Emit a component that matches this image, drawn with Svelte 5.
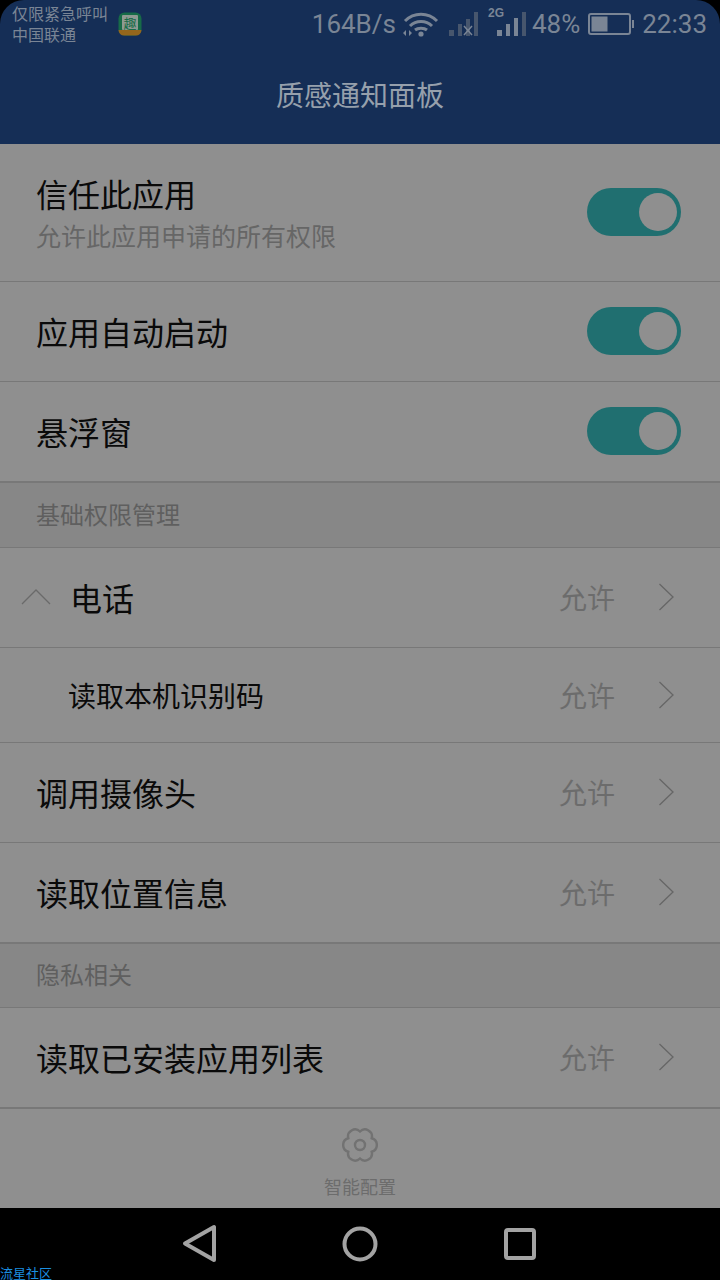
<script lang="ts">
	const basic = [
		{ label: '读取本机识别码', cls: 'sub' },
		{ label: '调用摄像头', cls: 'tall' },
		{ label: '读取位置信息', cls: 'tall' }
	];
	const toggles = ['应用自动启动', '悬浮窗'];

	// six lobed outline of the settings gear
	const valley = (k: number) => {
		const a = ((30 + 60 * k) * Math.PI) / 180;
		return `${(18 + 13.5 * Math.cos(a)).toFixed(2)} ${(18 + 13.5 * Math.sin(a)).toFixed(2)}`;
	};
	const gear =
		`M${valley(0)}` +
		[1, 2, 3, 4, 5, 6].map((k) => ` A7 7 0 0 0 ${valley(-k)}`).join('') +
		'z';
</script>

<div class="screen">
	<header class="top">
		<div class="status">
			<div class="carrier">
				<span>仅限紧急呼叫</span>
				<span>中国联通</span>
			</div>
			<svg class="app-icon" width="24" height="24" viewBox="0 0 24 24">
				<rect width="23" height="23" x="0.5" y="0.5" rx="6" fill="#176b48" />
				<rect x="4" y="3" width="16" height="15" rx="1" fill="#8f9a92" />
				<path d="M0.5 18h23a5.500 5.500 0 0 1-5.500 5.500h-12a5.500 5.500 0 0 1-5.500-5.500z" fill="#94661c" />
				<text x="12" y="16" text-anchor="middle" font-size="13" fill="#176b48">趣</text>
			</svg>
			<div class="indicators">
				<span class="speed">164B/s</span>
				<svg class="wifi" width="36" height="26" viewBox="0 0 36 26" fill="none" stroke="#7a8595">
					<path d="M2 10c9-9 23-9 32 0M7 15c6-6 16-6 22 0M12 19c3-2.500 9-2.500 12 0" stroke-width="3" />
					<circle cx="18" cy="23" r="2.600" fill="#7a8595" stroke="none" />
					<path d="M0 22l3-3v6zM9 22l-3-3v6z" fill="#7a8595" stroke="none" />
				</svg>
				<svg class="sig1" width="30" height="24" viewBox="0 0 30 24">
					<rect x="0" y="18" width="5" height="6" fill="#47566d" />
					<rect x="9" y="12" width="4" height="12" fill="#47566d" />
					<rect x="17" y="7" width="4" height="17" fill="#47566d" />
					<rect x="25" y="0" width="4" height="24" fill="#47566d" />
					<path d="M15 14l8 9M23 14l-8 9" stroke="#7a8595" stroke-width="1.500" />
				</svg>
				<div class="sig2">
					<b>2G</b>
					<svg width="30" height="24" viewBox="0 0 30 24">
						<rect x="0" y="18" width="5" height="6" fill="#7a8595" />
						<rect x="9" y="12" width="4" height="12" fill="#7a8595" />
						<rect x="17" y="6" width="4" height="18" fill="#7a8595" />
						<rect x="25" y="0" width="4" height="24" fill="#47566d" />
					</svg>
				</div>
				<span class="pct">48%</span>
				<svg width="46" height="24" viewBox="0 0 46 24">
					<rect x="1" y="2" width="41" height="20" rx="2" fill="none" stroke="#7a8595" stroke-width="2" />
					<rect x="3.500" y="4.500" width="16" height="15" fill="#7a8595" />
					<rect x="44" y="8" width="2" height="8" fill="#7a8595" />
				</svg>
				<span class="time">22:33</span>
			</div>
		</div>
		<h1>质感通知面板</h1>
	</header>

	<main class="list">
		<div class="row first">
			<div>
				<div class="title">信任此应用</div>
				<div class="desc">允许此应用申请的所有权限</div>
			</div>
			<span class="switch"><i></i></span>
		</div>
		{#each toggles as t}
			<div class="row toggle">
				<div class="title">{t}</div>
				<span class="switch"><i></i></span>
			</div>
		{/each}

		<div class="section">基础权限管理</div>

		<div class="row tall phone">
			<svg class="up" width="30" height="18" viewBox="0 0 30 18" fill="none" stroke="#6a6a6a" stroke-width="1.300">
				<path d="M1 16L15 2l14 14" />
			</svg>
			<div class="title grow">电话</div>
			<span class="allow">允许</span>
			<svg class="chev" width="16" height="28" viewBox="0 0 16 28" fill="none" stroke="#666" stroke-width="1.300">
				<path d="M1.500 1L15 14 1.500 27" />
			</svg>
		</div>
		{#each basic as item}
			<div class="row {item.cls}">
				<div class="title grow">{item.label}</div>
				<span class="allow">允许</span>
				<svg class="chev" width="16" height="28" viewBox="0 0 16 28" fill="none" stroke="#666" stroke-width="1.300">
					<path d="M1.500 1L15 14 1.500 27" />
				</svg>
			</div>
		{/each}

		<div class="section short">隐私相关</div>

		<div class="row tall last">
			<div class="title grow">读取已安装应用列表</div>
			<span class="allow">允许</span>
			<svg class="chev" width="16" height="28" viewBox="0 0 16 28" fill="none" stroke="#666" stroke-width="1.300">
				<path d="M1.500 1L15 14 1.500 27" />
			</svg>
		</div>
	</main>

	<div class="bottom">
		<svg width="36" height="36" viewBox="0 0 36 36" fill="none" stroke="#727272" stroke-width="2.400">
			<path d={gear} />
			<circle cx="18" cy="18" r="5" />
		</svg>
		<span>智能配置</span>
	</div>

	<nav class="nav">
		<svg width="36" height="40" viewBox="0 0 36 40" fill="none" stroke="#a3a3a3" stroke-width="4" stroke-linejoin="round">
			<path d="M32 3v33L3 19.500z" />
		</svg>
		<svg width="36" height="36" viewBox="0 0 36 36" fill="none" stroke="#a3a3a3" stroke-width="4">
			<circle cx="18" cy="18" r="15.500" />
		</svg>
		<svg width="36" height="32" viewBox="0 0 36 32" fill="none" stroke="#a3a3a3" stroke-width="4" stroke-linejoin="round">
			<rect x="4" y="2" width="28" height="28" rx="2" />
		</svg>
		<span class="mark">流星社区</span>
	</nav>
</div>

<style>
	:global(body) {
		margin: 0;
		background: #000;
	}

	.screen {
		width: 720px;
		height: 1280px;
		display: flex;
		flex-direction: column;
		overflow: hidden;
		background: #000;
		font-family: 'Noto Sans CJK SC', 'Liberation Sans', sans-serif;
	}

	.top {
		height: 144px;
		flex: none;
		background: #152e56;
		border-radius: 24px 24px 0 0;
		display: flex;
		flex-direction: column;
	}

	.status {
		height: 48px;
		padding: 0 13px 0 12px;
		display: flex;
		align-items: center;
		color: #7a8595;
	}

	.carrier {
		display: flex;
		flex-direction: column;
		font-size: 16px;
		line-height: 21px;
	}

	.carrier span {
		height: 21px;
	}

	.app-icon {
		margin-left: 10px;
	}

	.indicators {
		margin-left: auto;
		display: flex;
		align-items: center;
		font-family: Roboto, sans-serif;
		font-size: 26px;
	}

	.wifi {
		margin-left: 7px;
	}

	.sig1 {
		margin-left: 10px;
	}

	.sig2 {
		position: relative;
		margin-left: 18px;
	}

	.sig2 b {
		position: absolute;
		left: -9px;
		top: -6px;
		font-size: 12px;
		line-height: 14px;
		font-family: 'Liberation Sans', sans-serif;
	}

	.sig2 svg {
		display: block;
	}

	.pct {
		margin: 0 8px 0 5px;
	}

	.time {
		margin-left: 8px;
	}

	h1 {
		margin: 0;
		flex: 1;
		display: flex;
		align-items: center;
		justify-content: center;
		padding-bottom: 4px;
		font-size: 28px;
		font-weight: 400;
		color: #96a0ac;
	}

	.list {
		flex: none;
		background: #8f8f8f;
	}

	.row {
		display: flex;
		align-items: center;
		justify-content: space-between;
		padding: 0 46px 0 36px;
		border-bottom: 1px solid #787878;
		box-sizing: border-box;
	}

	.title {
		font-size: 32px;
		line-height: 44px;
		color: #0a0a0a;
	}

	.grow {
		flex: 1;
	}

	.desc {
		font-size: 25px;
		line-height: 32px;
		color: #666;
		margin-top: 4px;
	}

	.first {
		height: 138px;
		padding-right: 39px;
		padding-bottom: 3px;
	}

	.first .switch {
		margin-top: 2px;
	}

	.toggle {
		height: 100px;
		padding-right: 39px;
		padding-bottom: 2px;
	}

	.switch {
		width: 94px;
		height: 48px;
		border-radius: 24px;
		background: #206f70;
		display: flex;
		align-items: center;
		justify-content: flex-end;
		padding-right: 4px;
		box-sizing: border-box;
	}

	.switch i {
		width: 38px;
		height: 38px;
		border-radius: 50%;
		background: #8f8f8f;
	}

	.section {
		height: 66px;
		box-sizing: border-box;
		padding: 0 36px 4px;
		display: flex;
		align-items: center;
		font-size: 24px;
		color: #5f5f5f;
		background: #878787;
		border-top: 1px solid #787878;
		border-bottom: 1px solid #787878;
	}

	.section.short {
		height: 65px;
	}

	.tall {
		height: 100px;
		padding-bottom: 2px;
	}

	.phone .up {
		margin: 0 19px 0 -15px;
	}

	.sub {
		height: 95px;
		padding-left: 68px;
	}

	.sub .title {
		font-size: 28px;
	}

	.allow {
		font-size: 28px;
		color: #6c6c6c;
		margin-right: 43px;
	}

	.chev {
		flex: none;
	}

	.bottom {
		height: 100px;
		flex: none;
		background: #8f8f8f;
		border-top: 1px solid #787878;
		box-sizing: border-box;
		display: flex;
		flex-direction: column;
		align-items: center;
		padding-top: 18px;
		font-size: 18px;
		color: #6c6c6c;
	}

	.bottom span {
		margin-top: 10px;
		line-height: 26px;
	}

	.nav {
		position: relative;
		flex: 1;
		background: #000;
		display: flex;
		align-items: center;
		justify-content: center;
		gap: 124px;
	}

	.mark {
		position: absolute;
		left: 0;
		bottom: 0;
		font-size: 13px;
		line-height: 14px;
		color: #1b8fe0;
	}
</style>
